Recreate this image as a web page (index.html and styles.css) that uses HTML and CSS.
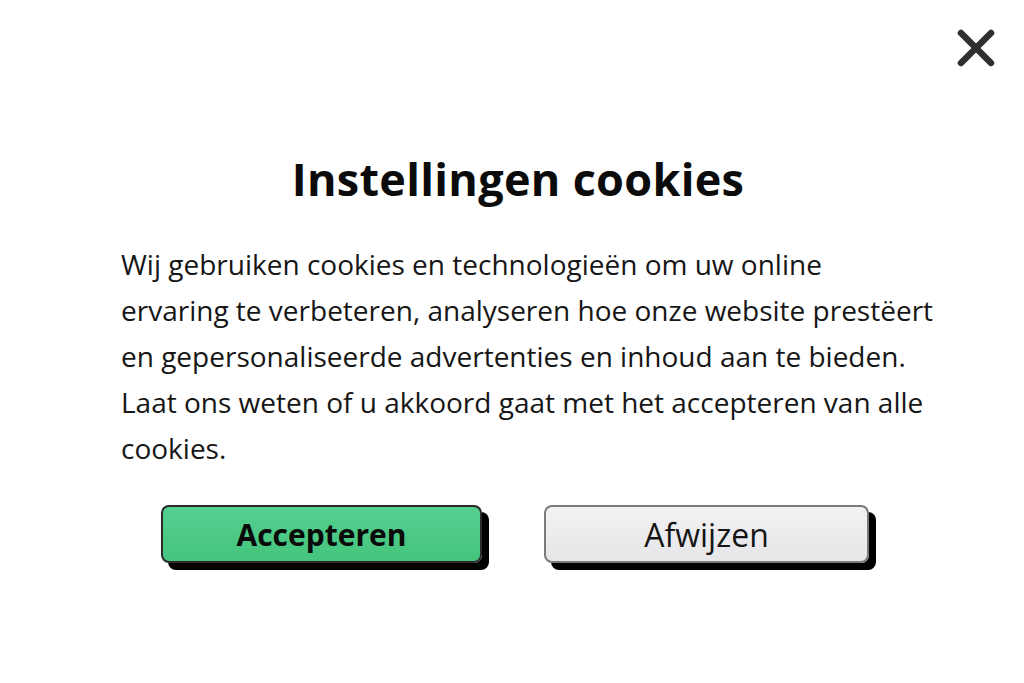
FILE: index.html
```html
<!DOCTYPE html>
<html lang="nl">
<head>
<meta charset="utf-8">
<title>Instellingen cookies</title>
<link rel="stylesheet" href="styles.css">
</head>
<body>
<div class="page">
  <div class="topbar">
    <button class="close" aria-label="Sluiten">
      <svg width="40" height="40" viewBox="0 0 40 40"><path d="M5 5 L35 35 M35 5 L5 35" stroke="#2e2e2e" stroke-width="6.5" stroke-linecap="round" fill="none"/></svg>
    </button>
  </div>
  <h1 class="title">Instellingen cookies</h1>
  <p class="body">Wij gebruiken cookies en technologieën om uw online<br>ervaring te verbeteren, analyseren hoe onze website prestëert<br>en gepersonaliseerde advertenties en inhoud aan te bieden.<br>Laat ons weten of u akkoord gaat met het accepteren van alle<br>cookies.</p>
  <div class="actions">
    <button class="btn btn-accept">Accepteren</button>
    <button class="btn btn-reject">Afwijzen</button>
  </div>
</div>
</body>
</html>
```

FILE: styles.css
```css
html, body {
  margin: 0;
  padding: 0;
  background: #ffffff;
}
body {
  font-family: "Open Sans", "Noto Sans", sans-serif;
  color: #111111;
  width: 1024px;
  height: 683px;
  overflow: hidden;
}
.page {
  padding: 28px 28px 0 121px;
}
.topbar {
  display: flex;
  justify-content: flex-end;
}
.close {
  background: none;
  border: 0;
  padding: 0;
  width: 40px;
  height: 40px;
}
.close svg { display: block; }
.title {
  margin: 84px 0 0 0;
  padding-right: 81px;
  text-align: center;
  font-size: 45px;
  font-weight: 700;
  line-height: 54px;
  color: #0b0b0b;
  letter-spacing: 0.3px;
}
.body {
  margin: 35px 0 0 0;
  font-size: 28px;
  line-height: 46px;
  color: #161616;
}
.actions {
  display: flex;
  gap: 62px;
  margin-top: 34px;
  padding-left: 40px;
}
.btn {
  font-family: "Open Sans", "Noto Sans", sans-serif;
  height: 58px;
  border: 2px solid #2b2b2b;
  border-radius: 8px;
  box-shadow: 7px 7px 0 #000000;
  padding: 0;
}
.btn-accept {
  width: 321px;
  background: linear-gradient(180deg, #55d08f 0%, #44c47d 100%);
  font-size: 30px;
  font-weight: 700;
  color: #0a0a0a;
}
.btn-reject {
  width: 325px;
  background: linear-gradient(180deg, #f2f2f4 0%, #e6e6e9 100%);
  border-color: #7a7a7a;
  font-size: 32px;
  font-weight: 400;
  color: #151515;
}
```
